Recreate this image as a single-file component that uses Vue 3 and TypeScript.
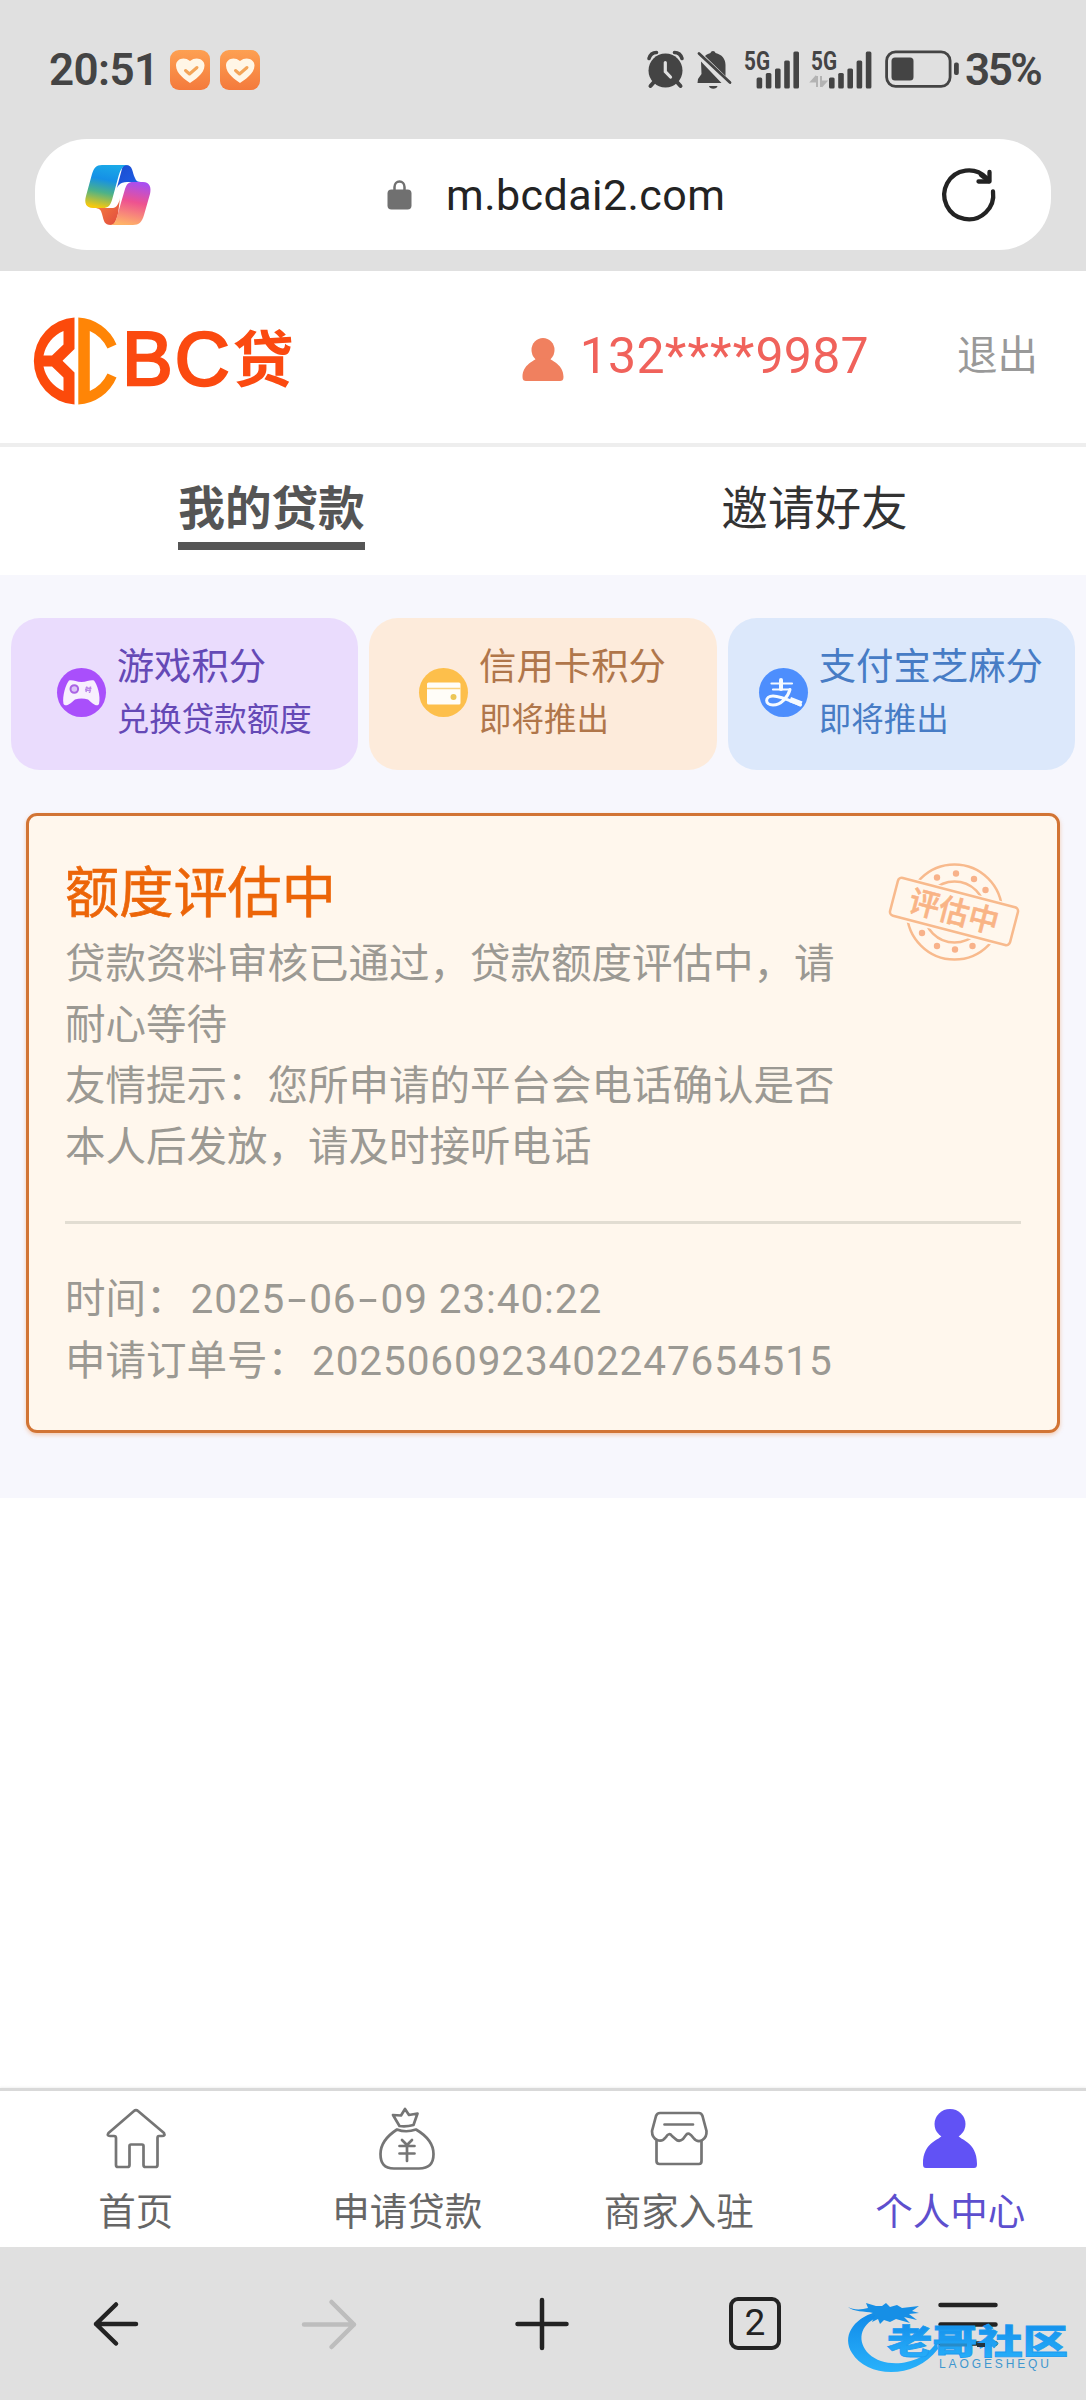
<script setup lang="ts">
interface ScoreCard {
  id: 'game' | 'credit' | 'alipay'
  title: string
  note: string
}
interface NavItem {
  id: 'home' | 'loan' | 'shop' | 'me'
  label: string
}

const scores: ScoreCard[] = [
  { id: 'game', title: '游戏积分', note: '兑换贷款额度' },
  { id: 'credit', title: '信用卡积分', note: '即将推出' },
  { id: 'alipay', title: '支付宝芝麻分', note: '即将推出' },
]
const navItems: NavItem[] = [
  { id: 'home', label: '首页' },
  { id: 'loan', label: '申请贷款' },
  { id: 'shop', label: '商家入驻' },
  { id: 'me', label: '个人中心' },
]
const activeNav = 'me'
const barHeights: number[] = [11, 15.5, 20, 28, 37]
</script>

<template>
  <div class="screen">
    <div class="browser-top">
      <div class="status">
        <span class="clock">20:51</span>
        <svg v-for="n in 2" :key="n" class="heart" width="40" height="40" viewBox="0 0 40 40">
          <defs>
            <linearGradient :id="'hg' + n" x1="0" y1="0" x2="0" y2="1">
              <stop offset="0" stop-color="#fda052" />
              <stop offset="1" stop-color="#f47a3c" />
            </linearGradient>
          </defs>
          <rect width="40" height="40" rx="9" :fill="'url(#hg' + n + ')'" />
          <path d="M20 33C16 30 6 24 6 15.500C6 9 14 6 20 11C26 6 34.500 9 34.500 15.500C34.500 24 24 30 20 33Z" fill="#fff6e6" />
          <path d="M15.500 20.500L19.500 24L27 17.500" fill="none" stroke="#f3a458" stroke-width="3" stroke-linecap="round" stroke-linejoin="round" />
        </svg>
        <span class="spacer"></span>
        <svg class="alarm" width="37" height="38" viewBox="0 0 37 38">
          <circle cx="18.500" cy="20.500" r="17" fill="#444" />
          <path d="M2 8.500C3 5 6 2.500 9.500 2.500M27.500 2.500C31 2.500 34 5 35 8.500" fill="none" stroke="#444" stroke-width="3.600" stroke-linecap="round" />
          <path d="M7 32L3.500 36M30 32L33.500 36" stroke="#444" stroke-width="4" stroke-linecap="round" />
          <path d="M18.300 12.500V21.500L23.500 27" fill="none" stroke="#e0e0e0" stroke-width="3.200" stroke-linecap="round" />
        </svg>
        <svg class="bell" width="35" height="40" viewBox="0 0 35 40">
          <path d="M4 11.500L24.500 33H.5L1 29L4.500 24Z" fill="#444" />
          <path d="M8 6C10 4 12 3.500 13.500 3C14 .3 18 .3 18.500 3C25 4.500 28.500 9 28.500 15V26Z" fill="#444" />
          <path d="M2 3.500L33 32.500" stroke="#444" stroke-width="2.800" stroke-linecap="round" />
          <path d="M12 36H20.500C20 39.600 12.500 39.600 12 36Z" fill="#444" />
        </svg>
        <svg class="signal" width="56" height="40" viewBox="0 0 56 40">
          <text x="0" y="19.500" textLength="26" lengthAdjust="spacingAndGlyphs">5G</text>
          <rect v-for="(h, i) in barHeights" :key="i" :x="12.600 + i * 9.200" :y="38.500 - h" width="5.600" :height="h" rx="1.500" fill="#444" />
        </svg>
        <svg class="signal second" width="61" height="40" viewBox="0 0 61 40">
          <text x="0" y="19.500" textLength="26" lengthAdjust="spacingAndGlyphs">5G</text>
          <path d="M6 26V37M5.500 26L.5 31.500H5.500M10 26V37M10.500 36.500L15 31.500H10.500" fill="#b3b3b3" stroke="#b3b3b3" stroke-width="2" />
          <rect v-for="(h, i) in barHeights" :key="i" :x="18 + i * 9.200" :y="38.500 - h" width="5.600" :height="h" rx="1.500" fill="#444" />
        </svg>
        <svg class="battery" width="75" height="38" viewBox="0 0 75 38">
          <rect x="1.600" y="1.800" width="63.500" height="34.500" rx="9" fill="none" stroke="#444" stroke-width="2.800" />
          <rect x="6.500" y="7.500" width="22" height="23" rx="3.500" fill="#444" />
          <rect x="69" y="12.500" width="4.800" height="12.500" rx="2" fill="#444" />
        </svg>
        <span class="percent">35%</span>
      </div>
      <div class="address">
        <svg class="copilot" width="66" height="62" viewBox="0 0 66 62">
          <defs>
            <linearGradient id="cpA" x1="0.600" y1="0" x2="0.400" y2="1">
              <stop offset="0" stop-color="#1aa9e8" />
              <stop offset=".35" stop-color="#1590e6" />
              <stop offset=".65" stop-color="#4db288" />
              <stop offset="1" stop-color="#f5c80f" />
            </linearGradient>
            <linearGradient id="cpB" x1="0.600" y1="0" x2="0.400" y2="1">
              <stop offset="0" stop-color="#a94ff0" />
              <stop offset=".45" stop-color="#ee5290" />
              <stop offset="1" stop-color="#ffb368" />
            </linearGradient>
            <linearGradient id="cpC" x1="0" y1="0" x2="1" y2="1">
              <stop offset="0" stop-color="#1b4bd0" />
              <stop offset="1" stop-color="#1e63e8" />
            </linearGradient>
            <linearGradient id="cpD" x1="0" y1="0" x2="1" y2="1">
              <stop offset="0" stop-color="#f8823c" />
              <stop offset="1" stop-color="#e04a40" />
            </linearGradient>
          </defs>
          <path d="M38 1H41C48 1 47 8 50 14C51 17 53 18 56 18H42C35 18 32 22 31 27Z" fill="url(#cpC)" />
          <path d="M14 44H28C31 44 34 40 35 34L33 50C31 58 29 61 26 61C19 61 19 57 17 50C16 46 15 45 11 44Z" fill="url(#cpD)" />
          <path d="M17 1H43C37 1 35 7 33 14L27 36C25 42 23 44 18 44H8C1 44-1 39 1 32L7 10C9 4 11 1 17 1Z" fill="url(#cpA)" />
          <path d="M48 18H58C65 18 66.500 24 65 30L59 51C57 58 54 61 48 61H25C30 61 31 56 33 49L40 25C42 20 43 18 48 18Z" fill="url(#cpB)" />
        </svg>
        <svg class="lock" width="25" height="30" viewBox="0 0 25 30">
          <path d="M7.500 11V7A5 5.500 0 0 1 17.500 7V11" fill="none" stroke="#707070" stroke-width="2.500" />
          <rect x=".5" y="9.500" width="24" height="20" rx="4" fill="#707070" />
        </svg>
        <span class="url">m.bcdai2.com</span>
        <span class="spacer"></span>
        <svg class="reload" width="56" height="56" viewBox="0 0 56 56" fill="none" stroke="#232323" stroke-width="4.300" stroke-linecap="round" stroke-linejoin="round">
          <path d="M52 24.500A24.500 24.500 0 1 1 45.500 11" />
          <path d="M48.500 5V14.500H37.500" />
          <path d="M40 8L48 14" />
        </svg>
      </div>
    </div>

    <header class="site-head">
      <svg class="mark" width="86" height="88" viewBox="0 0 86 88">
        <path fill="#fc4a0b" fill-rule="evenodd" d="M42.500 .5V32L30.500 43.800L42.500 55.500V87.500A43.600 43.600 0 0 1 42.500 .5ZM31.500 14A34 34 0 0 0 11.500 38.500H20L31.500 27.500ZM11.500 49.500A34 34 0 0 0 31.500 74V60.500L20 49.500Z" />
        <path fill="#ff8506" d="M46.300 .5A44 44 0 0 1 84.500 27.500L75.500 31.500A36 36 0 0 0 57.800 14V74A36 36 0 0 0 75.500 56.500L84.500 60.500A44 44 0 0 1 46.300 87.500Z" />
      </svg>
      <span class="brand"><span class="brand-en">BC</span><span class="brand-cn">贷</span></span>
      <span class="spacer"></span>
      <svg class="user" width="42" height="43" viewBox="0 0 42 43" fill="#f0805f">
        <ellipse cx="21" cy="12" rx="11.500" ry="12" />
        <path d="M14 20.500H28C29 23 41.500 26 41.500 39C41.500 42 40 43 38 43H4C2 43 .5 42 .5 39C.5 26 13 23 14 20.500Z" />
      </svg>
      <span class="phone">132<span class="mask">****</span>9987</span>
      <span class="logout">退出</span>
    </header>

    <div class="tabs">
      <div class="tab"><span class="tab-label active">我的贷款</span></div>
      <div class="tab"><span class="tab-label">邀请好友</span></div>
    </div>

    <main class="content">
      <div class="scores">
        <div v-for="s in scores" :key="s.id" class="score" :class="s.id">
          <svg width="49" height="49" viewBox="0 0 49 49">
            <template v-if="s.id === 'game'">
              <circle cx="24.500" cy="24.500" r="24.500" fill="#a94ffb" />
              <path d="M12 12.500C16 11.500 19 14 24.500 14S33 11.500 37 12.500C40 16 44 28 42 36C40 40 34 34 31 31.500C27 30 22 30 18 31.500C15 34 9 40 6.500 36C5 28 9 16 12 12.500Z" fill="#f7effe" />
              <circle cx="17.300" cy="21" r="3.800" fill="#dcc3f8" stroke="#aa63e3" stroke-width="2" />
              <path d="M28 21.500L34 23M30 18.500L29 24M33.500 18.500L32.500 25M28.500 20L34.500 20.500" stroke="#ba86e8" stroke-width="1.500" />
            </template>
            <template v-else-if="s.id === 'credit'">
              <circle cx="24.500" cy="24.500" r="24.500" fill="#fdbf4b" />
              <rect x="8" y="14.500" width="33.500" height="22" rx="1.500" fill="#fffdf8" />
              <path d="M8 20.500H41.500" stroke="#fbd27e" stroke-width="1.600" />
              <circle cx="34.500" cy="29" r="3" fill="#ecc657" />
            </template>
            <template v-else>
              <circle cx="24.500" cy="24.500" r="24.500" fill="#4d8efd" />
              <g fill="none" stroke="#f5faff" stroke-linecap="round">
                <path d="M12.500 15.500H33M14 21.500H31" stroke-width="2.200" />
                <path d="M22 12V21" stroke-width="4" />
                <path d="M31 21.500C29 29 22 37 14 37C5.500 37 5.500 28 14 28C22 28 33 33.500 41.500 37" stroke-width="3" />
                <path d="M31 31.500L42.500 36" stroke-width="5.500" stroke-linecap="butt" />
              </g>
            </template>
          </svg>
          <div class="score-text">
            <div class="score-title">{{ s.title }}</div>
            <div class="score-note">{{ s.note }}</div>
          </div>
        </div>
      </div>

      <section class="order">
        <svg class="stamp" width="134" height="102" viewBox="0 0 134 102">
          <g fill="none" stroke="#f8ba8d" stroke-width="2.500">
            <circle cx="67.500" cy="51" r="47.500" />
            <circle cx="67.500" cy="51" r="30.500" />
          </g>
          <g fill="#f8b28a">
            <circle cx="50" cy="16.500" r="3.200" /><circle cx="69" cy="12.500" r="3.200" />
            <circle cx="87" cy="18" r="3.200" /><circle cx="98.500" cy="29" r="3.200" />
            <circle cx="35" cy="72" r="3.200" /><circle cx="50" cy="85" r="3.200" />
            <circle cx="68" cy="88.500" r="3.200" /><circle cx="85.500" cy="85" r="3.200" />
          </g>
          <g transform="rotate(14.600 67 50.500)">
            <path d="M4 28.500H130V73H4Z" fill="#fff7ed" />
            <rect x="5" y="31" width="124" height="39" rx="4" fill="none" stroke="#f8ba8d" stroke-width="2.500" />
            <text x="67" y="61.500" text-anchor="middle" class="stamp-text">评估中</text>
          </g>
        </svg>
        <h2>额度评估中</h2>
        <p class="message">贷款资料审核已通过，贷款额度评估中，请耐心等待<br />友情提示：您所申请的平台会电话确认是否本人后发放，请及时接听电话</p>
        <div class="details">
          <div>时间：<span class="num">2025<i class="dash">-</i>06<i class="dash">-</i>09 23:40:22</span></div>
          <div>申请订单号：<span class="num">2025060923402247654515</span></div>
        </div>
      </section>
    </main>

    <nav class="site-nav">
      <a v-for="n in navItems" :key="n.id" class="nav-item" :class="{ current: n.id === activeNav }">
        <svg width="64" height="66" viewBox="0 0 64 66" fill="none" stroke="#757575" stroke-width="2.700" stroke-linejoin="round" stroke-linecap="round">
          <path v-if="n.id === 'home'" d="M30 4Q32 2 34 4L60 26Q61.500 29 58 29H55Q53.500 29 53.500 31V58Q53.500 60 51.500 60H41.500Q39.500 60 39.500 58V39Q39.500 37.500 38 37.500H27Q25.500 37.500 25.500 39V58Q25.500 60 23.500 60H14Q12 60 12 58V31Q12 29 10 29H6Q2.500 29 4.500 26Z" />
          <template v-else-if="n.id === 'loan'">
            <path d="M24.500 19L18 8L26 8.500L30 2L34 8L42.500 6.500L38.500 18Q31 20 24.500 19Z" />
            <path d="M22 22.500Q31 26 41 22.500C52 29 58.500 37 58.500 47C58.500 57 54 61.500 44 61.500H19C9 61.500 5.500 56 5.500 47C5.500 37 12 29 22 22.500Z" />
            <path d="M27 33L32 38L37 33M24.500 39H39.500M24.500 46.500H39.500M32 39V54" />
          </template>
          <template v-else-if="n.id === 'shop'">
            <path d="M13 6H52Q54.500 6 55.500 9L59.500 24C60 32 52 38 46.500 31Q41.500 24 39 28L36 32Q32 35.500 28.500 32L25 29Q22 25 19 30C14 37 5 33 5 24L9 9Q10 6 13 6Z" />
            <path d="M17.500 17.500H46M9.500 34V54Q9.500 57 12.500 57H52Q54.500 57 54.500 54V34" />
          </template>
          <g v-else fill="#6152f5" stroke="none">
            <ellipse cx="32" cy="17" rx="15.500" ry="15" />
            <path d="M24 28H40C41 33 59 34 59 57C59 60 58 61 56 61H8C6 61 5 60 5 57C5 34 23 33 24 28Z" />
          </g>
        </svg>
        <span>{{ n.label }}</span>
      </a>
    </nav>

    <footer class="browser-bar">
      <div class="tool"><svg width="60" height="60" viewBox="0 0 60 60"><path d="M50 30H10M30 10.500L10 30L30 49.500" /></svg></div>
      <div class="tool disabled"><svg width="60" height="60" viewBox="0 0 60 60"><path d="M5 30.500H55M32.500 8L55 30.500L32.500 53" /></svg></div>
      <div class="tool"><svg width="60" height="60" viewBox="0 0 60 60"><path d="M5.500 30H54.500M30 6V54" /></svg></div>
      <div class="tool"><span class="tab-count">2</span></div>
      <div class="tool"><svg width="60" height="60" viewBox="0 0 60 60"><path d="M2.500 11H57.500M2.500 30.500H57.500M2.500 49.500H57.500" /></svg></div>
      <svg class="watermark" width="240" height="90" viewBox="0 0 240 90">
        <defs>
          <linearGradient id="wm" x1="0" y1="0" x2="0" y2="1">
            <stop offset="0" stop-color="#1089e8" />
            <stop offset="1" stop-color="#29b2fb" />
          </linearGradient>
        </defs>
        <path d="M36 19C12 26 2 44 12 60C26 84 74 88 98 56L97 48C84 72 46 77 29 61C17 49 19 32 38 24Z" fill="url(#wm)" />
        <path d="M8 14C13 17 21 17 28 15L26 10L36 13L42 13L46 10L50 14L57 12L62 15L79 13L72 18L79 20L69 21L77 27L64 24L70 30L56 26L50 29L44 27L40 31L38 26L32 29L35 22L29 24L33 20C25 18 13 19 8 14Z" fill="#168fe6" />
        <text class="wm-cn" x="47" y="0" textLength="181" lengthAdjust="spacingAndGlyphs" transform="translate(0 61) scale(1 .75)">老哥社区</text>
        <path d="M100 52H127" stroke="#278bc8" stroke-width="3" />
        <path d="M137 52H145" stroke="#24333c" stroke-width="4" />
        <text class="wm-en" x="99" y="74.500" textLength="110">LAOGESHEQU</text>
      </svg>
    </footer>
  </div>
</template>

<style>
body {
  background: #fff;
}
</style>

<style scoped>
* {
  box-sizing: border-box;
}
.screen {
  width: 1086px;
  height: 2400px;
  display: flex;
  flex-direction: column;
  background: #fff;
  font-family: Roboto, "Noto Sans CJK SC", sans-serif;
  overflow: hidden;
}
.screen svg {
  display: block;
  flex: none;
  overflow: visible;
}
.spacer {
  flex: 1;
}
.browser-top {
  height: 271px;
  background: #e0e0e0;
  flex: none;
}
.status {
  height: 139px;
  padding: 50px 43px 0 49px;
  display: flex;
  align-items: flex-start;
  color: #444;
}
.clock,
.percent {
  font-size: 44px;
  line-height: 40px;
  font-weight: 600;
  white-space: nowrap;
}
.clock {
  width: 121px;
  letter-spacing: -0.600px;
}
.heart + .heart {
  margin-left: 10px;
}
.bell {
  margin-left: 13px;
}
.signal {
  margin-left: 12px;
}
.second {
  margin-left: 11px;
}
.signal text {
  font: 700 26px Roboto, sans-serif;
  fill: #444;
}
.battery {
  margin-left: 13px;
}
.percent {
  width: 78px;
  margin-left: 5px;
  letter-spacing: -2.500px;
}
.address {
  height: 111px;
  margin: 0 35px;
  padding: 0 54px 0 50px;
  border-radius: 52px;
  background: #fff;
  display: flex;
  align-items: center;
}
.lock {
  margin-left: 236px;
}
.url {
  margin-left: 34px;
  font-size: 43px;
  line-height: 60px;
  letter-spacing: 0.450px;
  color: #232323;
}
.site-head {
  height: 176px;
  border-bottom: 4px solid #eee;
  padding: 0 48px 0 32px;
  display: flex;
  align-items: center;
  flex: none;
}
.mark {
  margin-top: 8px;
}
.brand {
  display: flex;
  align-items: baseline;
  color: #fb4a10;
  margin: 8px 0 0 4px;
  line-height: 90px;
}
.brand-en {
  font-family: "Liberation Sans", sans-serif;
  font-size: 76px;
  letter-spacing: 2px;
  -webkit-text-stroke: 2.500px #fb4a10;
}
.brand-cn {
  font-size: 61px;
  font-weight: 700;
  margin-left: 1px;
  position: relative;
  top: -3px;
}
.user {
  margin: 5px 16px 0 0;
}
.phone {
  margin-top: -3px;
  font-size: 50px;
  letter-spacing: 0.300px;
  color: #f0625b;
}
.mask {
  letter-spacing: 1.100px;
}
.logout {
  margin: -9px 0 0 88px;
  font-size: 40.500px;
  color: #999;
}
.tabs {
  height: 128px;
  display: flex;
  flex: none;
}
.tab {
  flex: 1;
  display: flex;
  justify-content: center;
}
.tab-label {
  height: 103px;
  padding-top: 32px;
  font-size: 46.600px;
  line-height: 60px;
  color: #333;
}
.tab-label.active {
  border-bottom: 8px solid #555;
  font-weight: 700;
  color: #555;
}
.content {
  height: 923px;
  background: #f7f7fd;
  padding-top: 43px;
  flex: none;
}
.scores {
  display: flex;
  gap: 11px;
  padding: 0 11px;
}
.score {
  flex: 1 1 0;
  height: 152px;
  border-radius: 29px;
  display: flex;
  align-items: center;
  justify-content: center;
  gap: 11px;
  white-space: nowrap;
}
.score svg {
  margin-top: -3px;
  margin-left: -1px;
}
.game {
  background: #eadcfd;
  color: #6549b6;
}
.credit {
  background: #fdebdb;
  color: #b0764a;
}
.alipay {
  background: #dce8fb;
  color: #477cc5;
}
.score-title {
  font-size: 37.400px;
  line-height: 54px;
}
.score-note {
  font-size: 32.500px;
  line-height: 52px;
}
.score-text {
  margin-top: -2px;
}
.order {
  position: relative;
  margin: 43px 26px 0;
  height: 620px;
  padding: 44px 36px 0;
  border: 3px solid #d27434;
  border-radius: 11px;
  background: #fff7ed;
  box-shadow: 0 2px 4px rgba(235, 120, 40, 0.350);
}
.stamp {
  position: absolute;
  top: 45px;
  right: 36px;
}
.stamp-text {
  font: 500 30.500px "Noto Sans CJK SC", sans-serif;
  fill: #f9b486;
  stroke: #f9b486;
  stroke-width: 0.600px;
}
h2 {
  margin: 0;
  font-size: 54.200px;
  line-height: 67px;
  font-weight: 400;
  color: #ec6508;
  -webkit-text-stroke: 0.600px #ec6508;
}
.message {
  margin: 7px 0 0;
  width: 776px;
  font-size: 40.500px;
  line-height: 60.900px;
  color: #9b9993;
}
.details {
  margin-top: 43px;
  padding-top: 44px;
  border-top: 3px solid #e2ddd2;
  font-size: 40.500px;
  line-height: 62.500px;
  color: #9b9993;
}
.num {
  margin-left: 4px;
  letter-spacing: 0.900px;
}
.dash {
  display: inline-block;
  width: 24px;
  font-style: normal;
  text-align: center;
  letter-spacing: 0;
  transform: scaleX(1.700);
}
.site-nav {
  margin-top: auto;
  height: 159px;
  border-top: 3px solid #d9d9d9;
  box-shadow: 0 -1px 2px rgba(0, 0, 0, 0.060);
  display: flex;
  flex: none;
}
.nav-item {
  flex: 1 1 0;
  display: flex;
  flex-direction: column;
  align-items: center;
  padding-top: 16px;
  font-size: 37.500px;
  line-height: 54px;
  color: #666;
}
.nav-item span {
  margin-top: 12px;
}
.nav-item.current {
  color: #5d4fce;
}
.browser-bar {
  position: relative;
  height: 153px;
  padding: 0 12px 0 10px;
  background: #e0e0e0;
  display: flex;
  align-items: center;
  flex: none;
}
.tool {
  flex: 1 1 0;
  display: flex;
  justify-content: center;
}
.tool path {
  fill: none;
  stroke: #232323;
  stroke-width: 4.500px;
  stroke-linecap: round;
  stroke-linejoin: round;
}
.tool.disabled path {
  stroke: #bdbdbd;
}
.tab-count {
  width: 52px;
  height: 53px;
  border: 4px solid #232323;
  border-radius: 9px;
  font-size: 37px;
  line-height: 43px;
  text-align: center;
  color: #232323;
}
.watermark {
  position: absolute;
  left: 840px;
  top: 46px;
}
.wm-cn {
  font: 900 45px "Noto Sans CJK SC", sans-serif;
  fill: url(#wm);
  stroke: #1c9bf0;
  stroke-width: 1px;
}
.wm-en {
  font: 400 12px "Liberation Sans", sans-serif;
  fill: #3f97cf;
}
</style>
